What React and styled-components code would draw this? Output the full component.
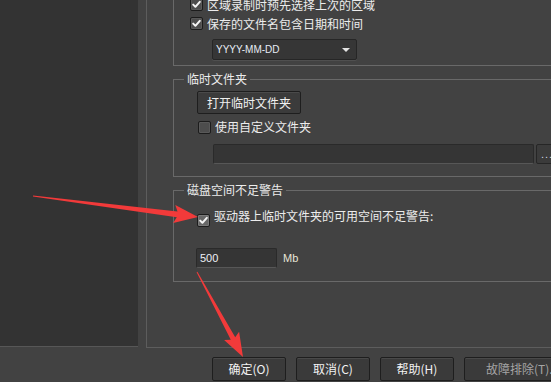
import React from "react";
import styled, { createGlobalStyle } from "styled-components";

const GlobalStyle = createGlobalStyle`
  html, body {
    margin: 0;
    padding: 0;
    background: #424242;
    overflow: hidden;
  }
  * {
    box-sizing: border-box;
  }
`;

const CJK = `"Noto Sans CJK SC", "Noto Sans", sans-serif`;
const LATIN = `"Liberation Sans", Arial, sans-serif`;

// arrow polygon from tail to tip, tapered shaft with a triangle head
const arrowPoints = (x1, y1, x2, y2, headLen, headW, neckW, tailW) => {
  const dx = x2 - x1;
  const dy = y2 - y1;
  const len = Math.hypot(dx, dy);
  const ux = dx / len;
  const uy = dy / len;
  const nx = -uy;
  const ny = ux;
  const bx = x2 - ux * headLen;
  const by = y2 - uy * headLen;
  const p = (x, y) => `${x.toFixed(1)},${y.toFixed(1)}`;
  return [
    p(x1 + (nx * tailW) / 2, y1 + (ny * tailW) / 2),
    p(bx + (nx * neckW) / 2, by + (ny * neckW) / 2),
    p(bx - ux * 3 + (nx * headW) / 2, by - uy * 3 + (ny * headW) / 2),
    p(x2, y2),
    p(bx - ux * 3 - (nx * headW) / 2, by - uy * 3 - (ny * headW) / 2),
    p(bx - (nx * neckW) / 2, by - (ny * neckW) / 2),
    p(x1 - (nx * tailW) / 2, y1 - (ny * tailW) / 2),
  ].join(" ");
};

const ARROWS = [
  { from: [33, 196], to: [198, 217], head: 21, width: 18, neck: 6 },
  { from: [197, 272], to: [243, 357], head: 21, width: 17, neck: 5 },
];

const App = () => {
  return (
    <Frame>
      <GlobalStyle />
      <Workspace>
        <Sidebar />
        <OptionsPanel>
          <Scroller>
            <Group>
              <GroupBody $pad="24px 0 5px 16px">
                <CheckRow>
                  <Check checked />
                  <Label>区域录制时预先选择上次的区域</Label>
                </CheckRow>
                <CheckRow>
                  <Check checked />
                  <Label>保存的文件名包含日期和时间</Label>
                </CheckRow>
                <Dropdown>
                  <DropText>YYYY-MM-DD</DropText>
                  <Caret />
                </Dropdown>
              </GroupBody>
            </Group>

            <Group>
              <Title>临时文件夹</Title>
              <GroupBody $pad="4px 0 12px 23px">
                <PushButton>打开临时文件夹</PushButton>
                <CheckRow $top={5} $height={16} $indent={1}>
                  <Check />
                  <Label>使用自定义文件夹</Label>
                </CheckRow>
                <PathRow>
                  <PathInput />
                  <BrowseButton>...</BrowseButton>
                </PathRow>
              </GroupBody>
            </Group>

            <Group>
              <Title>磁盘空间不足警告</Title>
              <GroupBody $pad="10px 0 13px 23px">
                <CheckRow $height={16}>
                  <Check checked focused />
                  <Label>驱动器上临时文件夹的可用空间不足警告:</Label>
                </CheckRow>
                <SizeRow>
                  <SizeInput>500</SizeInput>
                  <Unit>Mb</Unit>
                </SizeRow>
              </GroupBody>
            </Group>
          </Scroller>
        </OptionsPanel>
      </Workspace>

      <ButtonBar>
        <DialogButton>确定(O)</DialogButton>
        <DialogButton>取消(C)</DialogButton>
        <DialogButton>帮助(H)</DialogButton>
        <DialogButton $dim>故障排除(T)...</DialogButton>
      </ButtonBar>

      <Annotations width="551" height="382" viewBox="0 0 551 382">
        {ARROWS.map((a, i) => (
          <polygon
            key={i}
            points={arrowPoints(a.from[0], a.from[1], a.to[0], a.to[1], a.head, a.width, a.neck, 1)}
            fill="#f23a3a"
          />
        ))}
      </Annotations>
    </Frame>
  );
};

const Check = ({ checked, focused }) => (
  <CheckBox $focused={focused}>
    {checked && (
      <svg width="11" height="11" viewBox="0 0 11 11">
        <path d="M2.2 5.6 L4.4 7.8 L8.8 2.8" fill="none" stroke="#f4f4f4" strokeWidth="2" strokeLinecap="round" strokeLinejoin="round" />
      </svg>
    )}
  </CheckBox>
);

const Frame = styled.div`
  position: relative;
  width: 551px;
  height: 382px;
  overflow: hidden;
  display: flex;
  flex-direction: column;
  background: #424242;
  color: #ececec;
  font-family: ${CJK};
  font-size: 12px;
`;

const Workspace = styled.div`
  display: flex;
  gap: 8px;
  height: 348px;
  flex-shrink: 0;
`;

const Sidebar = styled.div`
  width: 138px;
  height: 347px;
  flex-shrink: 0;
  background: #333333;
  border-bottom: 1px solid #575757;
`;

const OptionsPanel = styled.div`
  flex: 0 0 460px;
  height: 348px;
  padding-left: 26px;
  border-left: 1px solid #5d5d5d;
  border-bottom: 1px solid #5d5d5d;
  overflow: hidden;
`;

const Scroller = styled.div`
  display: flex;
  flex-direction: column;
  gap: 5px;
  margin-top: -30px;
`;

const Group = styled.fieldset`
  margin: 0;
  padding: 0;
  min-width: 0;
  border: 1px solid #696969;
`;

const Title = styled.legend`
  margin-left: 10px;
  padding: 0 3px;
  font-size: 12px;
  line-height: 16px;
  color: #ececec;
`;

const GroupBody = styled.div`
  display: flex;
  flex-direction: column;
  align-items: flex-start;
  padding: ${({ $pad }) => $pad};
`;

const CheckRow = styled.div`
  display: flex;
  align-items: center;
  gap: 4px;
  height: ${({ $height }) => $height || 19}px;
  margin-top: ${({ $top }) => $top || 0}px;
  margin-left: ${({ $indent }) => $indent || 0}px;
`;

const CheckBox = styled.span`
  display: flex;
  align-items: center;
  justify-content: center;
  width: 13px;
  height: 13px;
  flex-shrink: 0;
  border: 1px solid #1c1c1c;
  border-radius: 2px;
  background: ${({ $focused }) => ($focused ? "#676767" : "#4d4d4d")};
  box-shadow: inset 0 0 0 1px ${({ $focused }) => ($focused ? "#7a7a7a" : "#595959")};
  transform: translateY(${({ $focused }) => ($focused ? 4 : 0)}px);
`;

const Label = styled.span`
  line-height: 16px;
  white-space: nowrap;
`;

const Dropdown = styled.div`
  display: flex;
  align-items: center;
  justify-content: space-between;
  width: 145px;
  height: 21px;
  margin: 6px 0 0 22px;
  padding: 0 6px 0 3px;
  background: #363636;
  border: 1px solid #262626;
  border-radius: 2px;
  box-shadow: 0 1px 0 #4f4f4f;
`;

const DropText = styled.span`
  font-family: ${LATIN};
  font-size: 10px;
  color: #e6ecf4;
`;

const Caret = styled.span`
  width: 0;
  height: 0;
  border-left: 4px solid transparent;
  border-right: 4px solid transparent;
  border-top: 4px solid #e4e4e4;
`;

const PushButton = styled.button`
  height: 23px;
  padding: 0 9px;
  background: #3b3b3b;
  border: 1px solid #1e1e1e;
  border-radius: 2px;
  box-shadow: inset 0 1px 0 #4a4a4a;
  color: #f0f0f0;
  font-family: ${CJK};
  font-size: 12px;
  line-height: 20px;
`;

const PathRow = styled.div`
  display: flex;
  gap: 2px;
  margin: 9px 0 0 16px;
`;

const PathInput = styled.div`
  width: 321px;
  height: 20px;
  background: #353535;
  border: 1px solid #2a2a2a;
  border-bottom-color: #575757;
  border-radius: 2px;
`;

const BrowseButton = styled.div`
  width: 28px;
  height: 20px;
  padding-left: 4px;
  background: #3b3b3b;
  border: 1px solid #262626;
  border-radius: 2px;
  font-family: ${LATIN};
  font-size: 11px;
  line-height: 18px;
  letter-spacing: 1px;
  color: #d4d8e4;
`;

const SizeRow = styled.div`
  display: flex;
  align-items: center;
  gap: 6px;
  margin: 24px 0 0 -1px;
`;

const SizeInput = styled.div`
  width: 81px;
  height: 20px;
  padding-left: 3px;
  background: #353535;
  border: 1px solid #2a2a2a;
  border-bottom-color: #575757;
  border-radius: 2px;
  font-family: ${LATIN};
  font-size: 11px;
  line-height: 18px;
  color: #eef0f6;
`;

const Unit = styled.span`
  font-family: ${LATIN};
  font-size: 11px;
  color: #e8e6d8;
`;

const ButtonBar = styled.div`
  display: flex;
  gap: 10px;
  padding: 9px 0 0 212px;
`;

const DialogButton = styled.button`
  flex-shrink: 0;
  width: ${({ $dim }) => ($dim ? "110px" : "74px")};
  height: 24px;
  padding: 0 0 0 ${({ $dim }) => ($dim ? "21px" : "0")};
  background: #3a3a3a;
  border: 1px solid #1e1e1e;
  border-radius: 2px;
  box-shadow: inset 0 1px 0 #494949;
  color: ${({ $dim }) => ($dim ? "#a4a4a4" : "#f2f2f2")};
  font-family: ${CJK};
  font-size: 12px;
  line-height: 22px;
  white-space: nowrap;
  text-align: ${({ $dim }) => ($dim ? "left" : "center")};
`;

const Annotations = styled.svg`
  position: absolute;
  left: 0;
  top: 0;
  pointer-events: none;
`;

export default App;
